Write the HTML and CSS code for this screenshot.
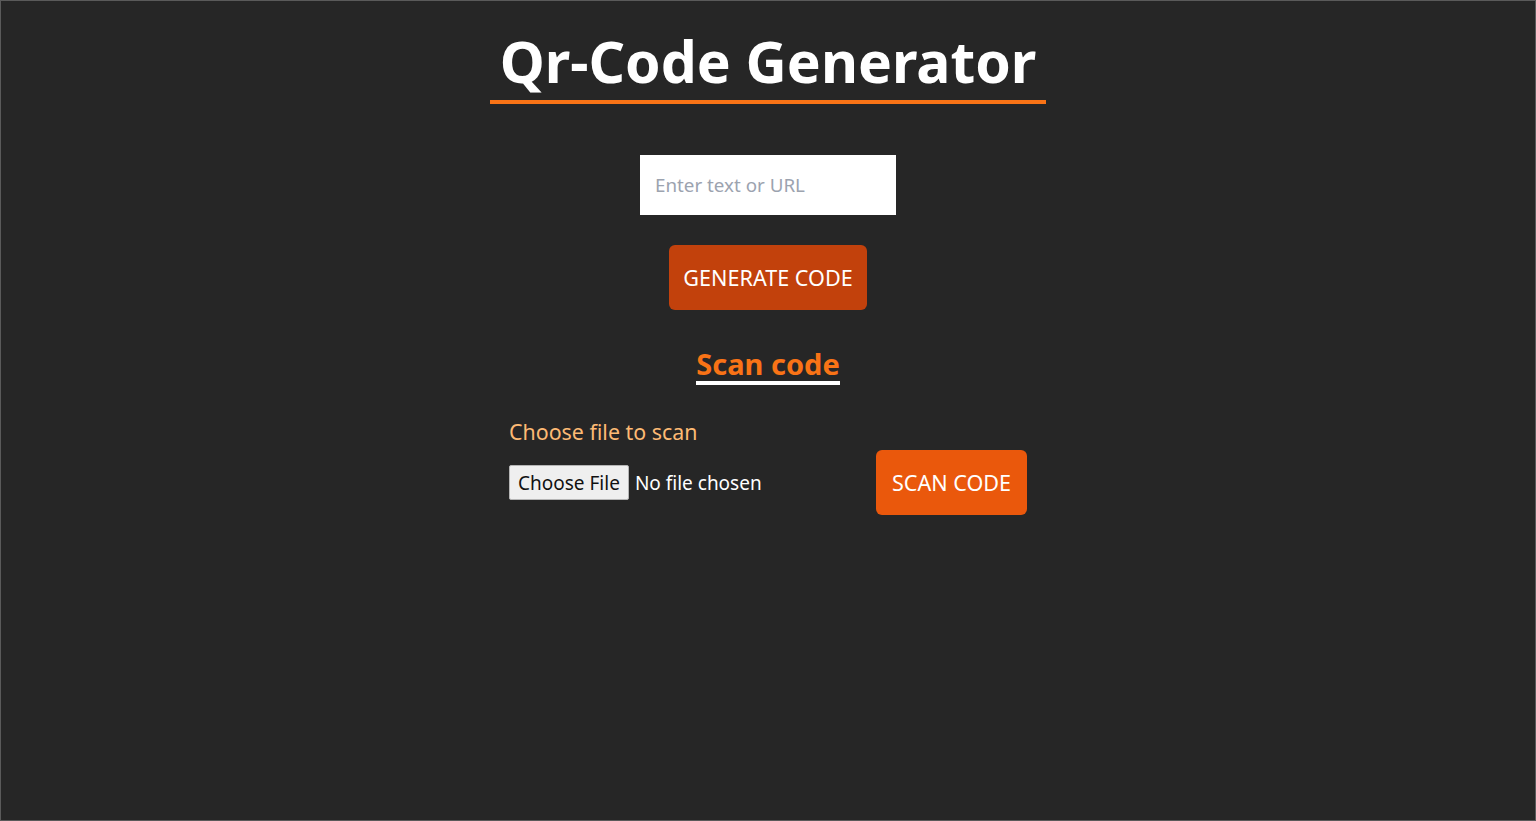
FILE: index.html
```html
<!DOCTYPE html>
<html lang="en">
<head>
<meta charset="utf-8">
<title>Qr-Code Generator</title>
<link rel="stylesheet" href="styles.css">
</head>
<body>
<div class="frame">
  <header class="header">
    <h1 class="title">Qr-Code Generator</h1>
  </header>
  <section class="generate">
    <input class="text-input" type="text" placeholder="Enter text or URL">
    <button class="btn btn-generate" type="button">GENERATE CODE</button>
  </section>
  <section class="scan">
    <h2 class="scan-title">Scan code</h2>
    <div class="scan-row">
      <div class="scan-field">
        <label class="scan-label" for="file">Choose file to scan</label>
        <input class="file-input" id="file" type="file">
      </div>
      <button class="btn btn-scan" type="button">SCAN CODE</button>
    </div>
  </section>
</div>
</body>
</html>
```

FILE: styles.css
```css
* { box-sizing: border-box; }
html, body { margin: 0; padding: 0; }
body {
  background: #262626;
  font-family: "Noto Sans", "Open Sans", sans-serif;
  color: #ffffff;
}
.frame {
  height: 821px;
  border: 1px solid #5a5a5a;
  display: flex;
  flex-direction: column;
  align-items: center;
}
.header { padding-top: 27px; }
.title {
  margin: 0;
  padding: 0 10px 6px;
  font-size: 57px;
  font-weight: 700;
  line-height: 66px;
  border-bottom: 4px solid #f97316;
}
.generate {
  margin-top: 51px;
  display: flex;
  flex-direction: column;
  align-items: center;
}
.text-input {
  width: 256px;
  height: 60px;
  border: none;
  outline: none;
  padding: 0 15px;
  font-family: inherit;
  font-size: 18.8px;
  color: #111;
  background: #fff;
}
.text-input::placeholder { color: #9ca3af; }
.btn {
  border: none;
  border-radius: 6px;
  color: #fff;
  font-family: inherit;
  font-size: 21.6px;
  height: 65px;
  padding: 0;
  flex-shrink: 0;
}
.btn-generate {
  margin-top: 30px;
  width: 198px;
  background: #c2410c;
}
.scan {
  margin-top: 37px;
  display: flex;
  flex-direction: column;
  align-items: center;
}
.scan-title {
  margin: 0;
  font-size: 29px;
  font-weight: 700;
  line-height: 34px;
  color: #f97316;
  border-bottom: 4px solid #ffffff;
}
.scan-row {
  margin-top: 32px;
  width: 518px;
  display: flex;
  justify-content: space-between;
  align-items: flex-end;
}
.scan-field {
  display: flex;
  flex-direction: column;
  align-items: flex-start;
  min-width: 0;
}
.scan-label {
  font-size: 21.4px;
  line-height: 30px;
  color: #fdba74;
}
.file-input {
  width: 300px;
  margin-top: 18px;
  margin-bottom: 15px;
  font-family: inherit;
  font-size: 19px;
  color: #fff;
}
.file-input::file-selector-button {
  font-family: inherit;
  font-size: 19px;
  height: 35px;
  padding: 0 8px;
  margin-right: 6px;
  background: #efefef;
  color: #111;
  border: 1px solid #b5b5b5;
  border-radius: 2px;
}
.btn-scan {
  width: 151px;
  background: #ea580c;
}
```
